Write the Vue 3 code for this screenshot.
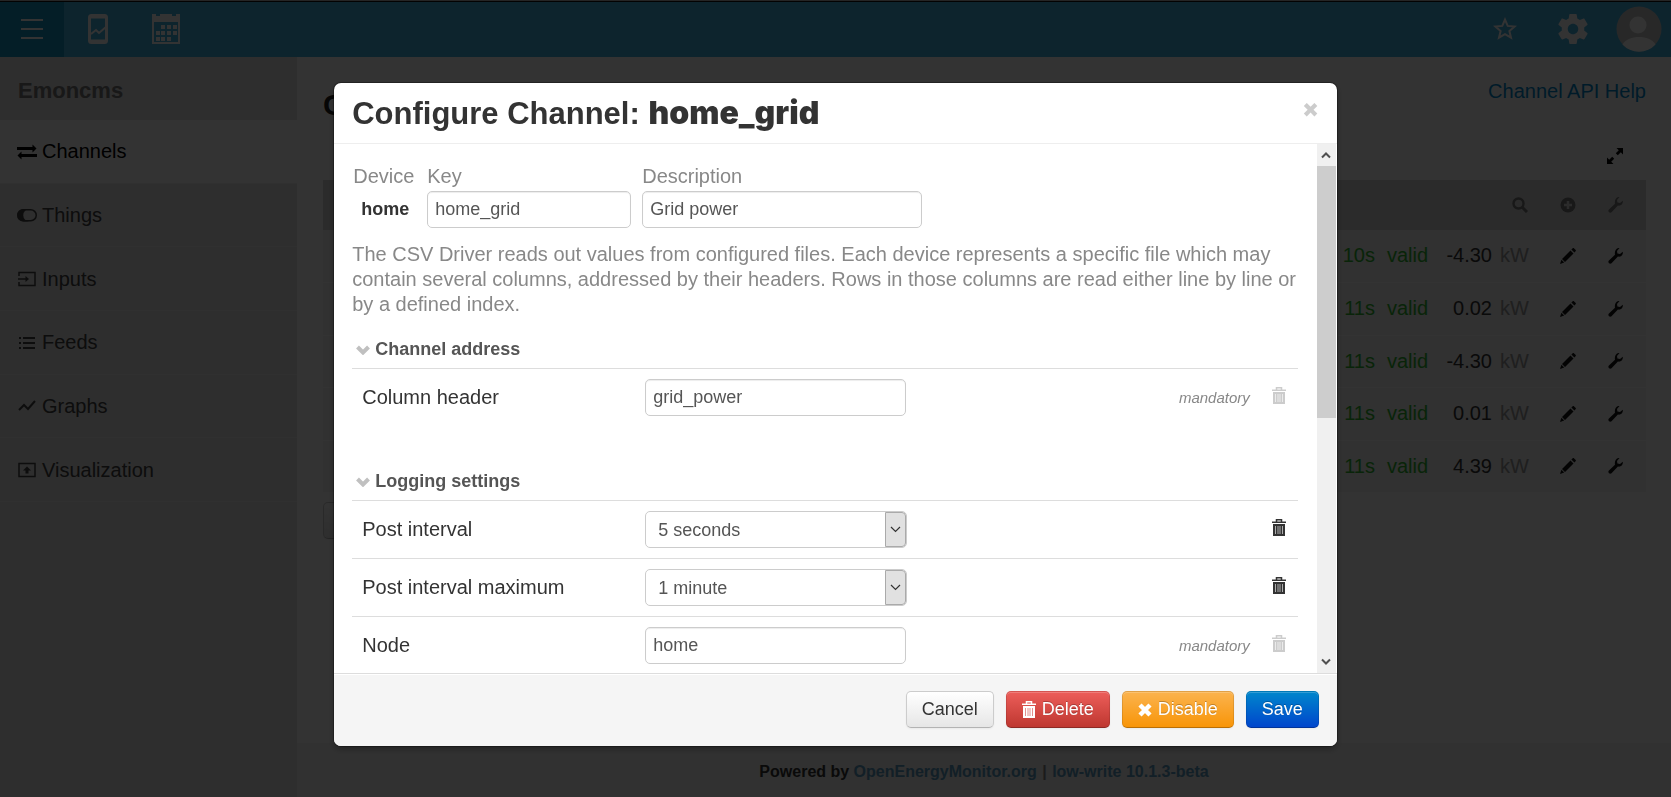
<script setup>
import { ref } from 'vue'

const menu = [
  { name: 'Channels', icon: 'swap' },
  { name: 'Things', icon: 'toggle' },
  { name: 'Inputs', icon: 'input' },
  { name: 'Feeds', icon: 'list' },
  { name: 'Graphs', icon: 'graph' },
  { name: 'Visualization', icon: 'present' },
]

const channels = [
  { time: '10s', value: '-4.30' },
  { time: '11s', value: '0.02' },
  { time: '11s', value: '-4.30' },
  { time: '11s', value: '0.01' },
  { time: '11s', value: '4.39' },
]

const key = ref('home_grid')
const description = ref('Grid power')
const header = ref('grid_power')
const interval = ref('5 seconds')
const maximum = ref('1 minute')
const node = ref('home')
</script>

<template>
  <div class="page">
    <header class="topbar">
      <button class="tb menu-btn" aria-label="Menu">
        <svg width="22" height="20" viewBox="0 0 22 20"><path d="M0 1h22M0 10h22M0 19h22" stroke="#fff" stroke-width="2" /></svg>
      </button>
      <button class="tb" aria-label="Apps">
        <svg width="20" height="30" viewBox="0 0 20 30" fill="none" stroke="#fff">
          <rect x="1.5" y="1.5" width="17" height="27" rx="2" stroke-width="3" />
          <path d="M1 3h18M1 27h18" stroke-width="3" />
          <path d="M3 20l5-4 3 3 7-6" stroke-width="2" />
        </svg>
      </button>
      <button class="tb" aria-label="Calendar">
        <svg width="28" height="30" viewBox="0 0 28 30" fill="#fff">
          <path fill-rule="evenodd" d="M0 0h4v2h4V0h12v2h4V0h4v30H0zM2 8v20h24V8z" />
          <path d="M9 11h4v4H9zM15 11h4v4h-4zM21 11h4v4h-4zM4 17h4v4H4zM9 17h4v4H9zM15 17h4v4h-4zM21 17h4v4h-4zM4 23h4v4H4zM9 23h4v4H9zM15 23h4v4h-4z" />
        </svg>
      </button>
      <span class="spacer"></span>
      <button class="tb star-btn" aria-label="Bookmarks">
        <svg width="24" height="24" viewBox="0 0 24 24"><path d="M12 2.6l2.7 6.3 6.9.6-5.2 4.5 1.6 6.7-6-3.6-6 3.6L7.6 14 2.4 9.500l6.900-.6z" fill="none" stroke="#fff" stroke-width="2" /></svg>
      </button>
      <button class="tb gear-btn" aria-label="Setup">
        <svg width="36" height="36" viewBox="0 0 24 24" fill="#fff"><path d="M19.430 12.980c.04-.32.07-.64.07-.98s-.03-.66-.07-.98l2.110-1.650c.19-.15.24-.42.120-.64l-2-3.460c-.12-.22-.39-.3-.61-.22l-2.490 1c-.52-.4-1.080-.73-1.690-.98l-.38-2.650C14.460 2.180 14.250 2 14 2h-4c-.25 0-.46.18-.49.42l-.38 2.650c-.61.25-1.170.59-1.690.98l-2.490-1c-.23-.09-.49 0-.61.22l-2 3.460c-.13.22-.07.49.12.64l2.110 1.650c-.04.32-.07.65-.07.98s.03.66.07.98l-2.110 1.650c-.19.15-.24.42-.12.64l2 3.460c.12.22.39.3.61.22l2.490-1c.52.4 1.080.73 1.690.98l.38 2.650c.03.24.24.42.49.42h4c.25 0 .46-.18.49-.42l.38-2.650c.61-.25 1.170-.59 1.690-.98l2.490 1c.23.09.49 0 .61-.22l2-3.460c.12-.22.07-.49-.12-.64l-2.110-1.650zM12 15.500c-1.930 0-3.500-1.570-3.500-3.500s1.570-3.500 3.500-3.500 3.500 1.570 3.500 3.500-1.570 3.500-3.500 3.500z" /></svg>
      </button>
      <button class="tb user-btn" aria-label="Account">
        <svg width="46" height="46" viewBox="0 0 46 46">
          <circle cx="23" cy="23" r="22.500" fill="#c8c8c8" />
          <circle cx="22" cy="19" r="8.500" fill="#fff" />
          <path d="M6.500 38.500C10 33 16 31 23 31s13 2 16.500 7.500A22.500 22.500 0 0 1 6.500 38.500z" fill="#fff" />
        </svg>
      </button>
    </header>

    <div class="columns">
      <aside class="sidebar">
        <h4>Emoncms</h4>
        <nav>
          <a v-for="(m, i) in menu" :key="m.name" href="#" :class="{ active: i === 0 }">
            <svg width="20" height="20" viewBox="0 0 20 20" fill="none" stroke="currentColor">
              <template v-if="m.icon === 'swap'">
                <path d="M0 6.500h17M3 13.500h17" stroke-width="3" />
                <path d="M15.500 2.500l4 4-4 4zM4.500 9.500l-4 4 4 4z" fill="currentColor" stroke="none" />
              </template>
              <template v-else-if="m.icon === 'toggle'">
                <rect x=".75" y="4.750" width="18.500" height="11" rx="5.500" stroke-width="1.500" />
                <path d="M6.500 4h6a6.200 6.200 0 0 0 0 12.500h-6a6.200 6.200 0 0 1 0-12.500z" fill="currentColor" stroke="none" />
              </template>
              <template v-else-if="m.icon === 'input'">
                <path d="M2 7V3.500h16v13H2V13" stroke-width="1.500" />
                <path d="M1 10h8" stroke-width="1.500" />
                <path d="M8.500 7l3.500 3-3.500 3z" fill="currentColor" stroke="none" />
              </template>
              <template v-else-if="m.icon === 'list'">
                <path d="M2 5h2M2 10h2M2 15h2M6 5h12M6 10h12M6 15h12" stroke-width="2" />
              </template>
              <template v-else-if="m.icon === 'graph'">
                <path d="M2 14l5-5 4 4 7-8" stroke-width="2" />
              </template>
              <template v-else>
                <rect x="2" y="3.500" width="16" height="13" stroke-width="1.500" />
                <path d="M10 6.500l4 4h-2.500v3h-3v-3H6z" fill="currentColor" stroke="none" />
              </template>
            </svg>
            {{ m.name }}
          </a>
        </nav>
      </aside>

      <main class="main">
        <div class="main-head">
          <h2>Channels</h2>
          <a href="#">Channel API Help</a>
        </div>
        <div class="tools">
          <button class="plain" aria-label="Expand">
            <svg width="16" height="16" viewBox="0 0 16 16" fill="#000"><path d="M9.500 0H16v6.500l-2.200-2.200-3 3-2-2 3-3zM6.500 16H0V9.500l2.200 2.200 3-3 2 2-3 3z" /></svg>
          </button>
        </div>
        <table class="list">
          <thead>
            <tr>
              <th class="time"></th>
              <th class="state"></th>
              <th class="value"></th>
              <th class="unit"><svg width="16" height="16" viewBox="0 0 16 16" fill="none" stroke="#777"><circle cx="6.500" cy="6.500" r="5" stroke-width="2.400" /><path d="M10 10l5 5" stroke-width="3" /></svg></th>
              <th class="act"><svg width="16" height="16" viewBox="0 0 16 16"><circle cx="8" cy="8" r="7.500" fill="#777" /><path d="M8 4v8M4 8h8" stroke="#d6d6d6" stroke-width="2.500" /></svg></th>
              <th class="act last"><svg width="16" height="16" viewBox="0 0 16 16" fill="#777"><path d="M12.500 0L10 3l.4 2.500L13 6l2.800-2.300c.6 3-1.800 5.600-4.900 4.900l-6.400 6.700c-1.500 1.400-4-.8-2.800-2.500l6.300-6C7.200 3 9.400-.4 12.500 0z" /></svg></th>
            </tr>
          </thead>
          <tbody>
            <tr v-for="(c, i) in channels" :key="i">
              <td class="ok time">{{ c.time }}</td>
              <td class="ok state">valid</td>
              <td class="value">{{ c.value }}</td>
              <td class="unit">kW</td>
              <td class="act"><svg width="16" height="16" viewBox="0 0 16 16" fill="#111"><path d="M11.400 1.500l3 3 1.100-1.200c.6-.6.5-1.100 0-1.600L14.100.4c-.5-.5-1-.5-1.600.1zM10.500 2.500L2 11l3 3 8.500-8.500zM1.400 11.800L0 16l4.200-1.400z" /></svg></td>
              <td class="act last"><svg width="16" height="16" viewBox="0 0 16 16" fill="#111"><path d="M12.500 0L10 3l.4 2.500L13 6l2.800-2.300c.6 3-1.800 5.600-4.900 4.900l-6.400 6.700c-1.500 1.400-4-.8-2.800-2.500l6.300-6C7.200 3 9.400-.4 12.500 0z" /></svg></td>
            </tr>
          </tbody>
        </table>
        <button class="btn new-btn" aria-label="New channel"></button>
        <footer class="page-footer">
          Powered by <a href="#">OpenEnergyMonitor.org</a> <span>|</span> <a href="#">low-write 10.1.3-beta</a>
        </footer>
      </main>
    </div>

    <div class="backdrop">
      <section class="modal" role="dialog" aria-labelledby="modal-title">
        <header class="modal-header">
          <h3 id="modal-title">Configure Channel: <b>home_grid</b></h3>
          <button class="close" aria-label="Close">×</button>
        </header>

        <div class="modal-middle">
          <div class="modal-body">
            <div class="ids">
              <div class="field device"><span class="cap">Device</span><strong>home</strong></div>
              <div class="field key"><label class="cap" for="key">Key</label><input id="key" v-model="key" type="text" /></div>
              <div class="field desc"><label class="cap" for="desc">Description</label><input id="desc" v-model="description" type="text" /></div>
            </div>
            <p class="info">The CSV Driver reads out values from configured files. Each device represents a specific file which may contain several columns, addressed by their headers. Rows in those columns are read either line by line or by a defined index.</p>

            <h5><svg width="14" height="10" viewBox="0 0 14 10"><path d="M1.500 2L7 7.500 12.500 2" fill="none" stroke="#c0c0c0" stroke-width="4" /></svg>Channel address</h5>
            <div class="row single">
              <label for="header">Column header</label>
              <input id="header" v-model="header" type="text" />
              <em>mandatory</em>
              <button class="plain trash off" disabled aria-label="Remove column header"><svg width="14" height="17" viewBox="0 0 14 17"><use href="#trash" /></svg></button>
            </div>

            <h5><svg width="14" height="10" viewBox="0 0 14 10"><path d="M1.500 2L7 7.500 12.500 2" fill="none" stroke="#c0c0c0" stroke-width="4" /></svg>Logging settings</h5>
            <div class="row">
              <label for="interval">Post interval</label>
              <span class="select">
                <select id="interval" v-model="interval"><option>5 seconds</option><option>10 seconds</option></select>
                <span class="arrow"><svg width="11" height="7" viewBox="0 0 11 7"><path d="M1 1l4.500 4.500L10 1" fill="none" stroke="#333" stroke-width="1.200" /></svg></span>
              </span>
              <em></em>
              <button class="plain trash" aria-label="Remove post interval"><svg width="14" height="17" viewBox="0 0 14 17"><use href="#trash" /></svg></button>
            </div>
            <div class="row">
              <label for="maximum">Post interval maximum</label>
              <span class="select">
                <select id="maximum" v-model="maximum"><option>1 minute</option><option>5 minutes</option></select>
                <span class="arrow"><svg width="11" height="7" viewBox="0 0 11 7"><path d="M1 1l4.500 4.500L10 1" fill="none" stroke="#333" stroke-width="1.200" /></svg></span>
              </span>
              <em></em>
              <button class="plain trash" aria-label="Remove post interval maximum"><svg width="14" height="17" viewBox="0 0 14 17"><use href="#trash" /></svg></button>
            </div>
            <div class="row">
              <label for="node">Node</label>
              <input id="node" v-model="node" type="text" />
              <em>mandatory</em>
              <button class="plain trash off" disabled aria-label="Remove node"><svg width="14" height="17" viewBox="0 0 14 17"><use href="#trash" /></svg></button>
            </div>
          </div>
          <div class="scrollbar" aria-hidden="true">
            <span class="step"><svg width="10" height="8" viewBox="0 0 10 8"><path d="M1 6.500l4-4 4 4" fill="none" stroke="#505050" stroke-width="2" /></svg></span>
            <span class="track"><span class="thumb"></span></span>
            <span class="step"><svg width="10" height="8" viewBox="0 0 10 8"><path d="M1 1.500l4 4 4-4" fill="none" stroke="#505050" stroke-width="2" /></svg></span>
          </div>
        </div>

        <footer class="modal-footer">
          <button class="btn">Cancel</button>
          <button class="btn danger"><svg width="14" height="17" viewBox="0 0 14 17"><use href="#trash" /></svg>Delete</button>
          <button class="btn warning"><svg width="14" height="14" viewBox="0 0 14 14"><path d="M2 2l10 10M12 2L2 12" stroke="#fff" stroke-width="4.500" /></svg>Disable</button>
          <button class="btn primary">Save</button>
        </footer>
      </section>
    </div>

    <svg class="defs" width="0" height="0" aria-hidden="true">
      <symbol id="trash" viewBox="0 0 14 17">
        <path d="M4.500 3V.75h5V3" fill="none" stroke="currentColor" stroke-width="1.500" />
        <path d="M0 2.500h14v1.500H0z" fill="currentColor" />
        <path fill-rule="evenodd" d="M1 5h12v12H1zM3 7v8h1V7zM5.500 7v8h1V7zM7.500 7v8h1V7zM10 7v8h1V7z" fill="currentColor" />
        <path d="M3 7h8v8H3z" fill="currentColor" opacity=".4" />
      </symbol>
    </svg>
  </div>
</template>

<style>
body { margin: 0; background: #fff; }
</style>

<style scoped>
* { box-sizing: border-box; }
.page {
  display: flex;
  flex-direction: column;
  min-height: 100vh;
  border-top: 1px solid #b8b8b8;
  font-family: "Liberation Sans", Arial, sans-serif;
  font-size: 20px;
  line-height: 25px;
  color: #333;
}
h2, h3, h4, h5, p { margin: 0; }
a { color: #08c; text-decoration: none; }
button, input, select { font-family: inherit; font-size: 18px; }
svg { display: block; }
.defs { position: absolute; }
.plain { padding: 0; border: 0; background: none; }

.topbar {
  display: flex;
  height: 56px;
  flex: none;
  border-top: 1px solid #111;
  background: #44b3e2;
}
.tb {
  display: flex;
  align-items: center;
  justify-content: center;
  width: 68px;
  padding: 0 0 1px;
  border: 0;
  background: none;
}
.tb.menu-btn { width: 64px; background: #1695c2; }
.spacer { flex: 1; }
.tb.user-btn { width: 64px; }

.columns { display: flex; flex: 1; }
.sidebar { width: 297px; flex: none; background: #e3e3e3; }
.sidebar h4 {
  padding: 21px 18px 17px;
  font-size: 22px;
  color: #777;
}
.sidebar nav {
  display: grid;
  grid-auto-rows: 1fr;
  min-height: 382px;
}
.sidebar a {
  display: flex;
  align-items: center;
  gap: 5px;
  padding: 1px 17px 0;
  border-bottom: 1px solid #eee;
  color: #444;
}
.sidebar a.active { background: #fff; color: #000; }

.main {
  display: flex;
  flex-direction: column;
  flex: 1;
  padding: 22px 25px 0 26px;
}
.main-head { display: flex; justify-content: space-between; }
.main-head h2 { padding-top: 6px; font-size: 30px; line-height: 40px; color: #222; }
.tools { display: flex; justify-content: flex-end; padding: 23px 23px 16px; }
.list { width: 100%; table-layout: fixed; border-collapse: collapse; }
.list th { height: 50px; padding: 0; background: #d6d6d6; }
.list td { height: 52px; padding: 0; border-bottom: 1px solid #fff; background: #f2f2f2; }
.list tr:nth-child(even) td { height: 53px; }
.ok { color: #2fb52f; }
.list .time { padding-right: 12px; text-align: right; }
.state { width: 39px; }
.value { width: 66px; text-align: right; }
.list .unit { width: 37px; padding-left: 8px; color: #999; }
.unit svg { margin-left: 12px; }
.act { width: 47px; }
.act svg { margin-left: auto; }
.list .last { width: 70px; padding-right: 23px; }
.new-btn { align-self: flex-start; width: 90px; height: 34px; margin-top: 9px; }
.page-footer {
  margin: auto -25px 0 -26px;
  padding: 16px 0 13px;
  background: #f2f2f2;
  font-size: 16px;
  font-weight: bold;
  text-align: center;
}
.page-footer a { color: #5a9cc0; }
.page-footer span { padding: 0 1px; color: #888; }

.backdrop {
  position: fixed;
  inset: 0;
  padding-top: 83px;
  background: rgba(0, 0, 0, 0.8);
}
.modal {
  width: 60%;
  margin: 0 auto;
  border-radius: 7px;
  background: #fff;
  box-shadow: 0 3px 7px rgba(0, 0, 0, 0.3), 0 0 0 1px rgba(0, 0, 0, 0.3);
  overflow: hidden;
}
.modal-header {
  display: flex;
  justify-content: space-between;
  padding: 12px 18px 10px;
  border-bottom: 1px solid #eee;
}
.modal-header h3 { font-size: 31px; line-height: 38px; }
.modal-header b { font-family: Inter, "Liberation Sans", sans-serif; font-size: 32px; font-weight: 900; line-height: 32px; }
.close {
  height: 28px;
  padding: 0;
  border: 0;
  background: none;
  font-family: Inter, "Liberation Sans", sans-serif;
  font-size: 24px;
  font-weight: 900;
  line-height: 28px;
  color: #ccc;
}
.modal-middle {
  display: flex;
  height: calc(100vh - 268px);
  padding-right: 1px;
}
.modal-body {
  flex: 1;
  min-width: 0;
  padding: 20px 19px 20px 18px;
  overflow: hidden;
}
.ids { display: flex; gap: 11px; }
.field { display: flex; flex-direction: column; gap: 2px; }
.cap { color: #888; }
.device { width: 64px; padding-left: 1px; }
.device strong { padding-left: 8px; font-size: 18px; line-height: 37px; }
.key { width: 204px; }
.desc { width: 280px; }
input, select {
  width: 100%;
  height: 37px;
  padding: 5px 7px;
  border: 1px solid #ccc;
  border-radius: 5px;
  background: #fff;
  color: #555;
  box-shadow: inset 0 1px 1px rgba(0, 0, 0, 0.075);
}
.info { padding: 14px 0 13px; color: #888; }
h5 {
  display: flex;
  align-items: center;
  gap: 5px;
  padding: 7px 0 6px 4px;
  font-size: 18px;
  color: #555;
}
.row {
  display: grid;
  grid-template-columns: 283px 261px 1fr 42px;
  align-items: center;
  height: 58px;
  padding: 0 2px 0 10px;
  border-top: 1px solid #ddd;
}
.row.single { margin-bottom: 36px; }
.row em { padding-right: 4px; font-size: 15px; color: #888; text-align: right; }
.trash { display: flex; justify-content: center; padding: 0 0 4px 8px; color: #333; }
.trash.off { color: #ccc; }
.select { position: relative; display: block; margin-right: -1px; }
.select select { appearance: none; padding: 5px 12px; box-shadow: none; }
.arrow {
  position: absolute;
  inset: 1px 1px 1px auto;
  display: flex;
  align-items: center;
  justify-content: center;
  width: 21px;
  border: 1px solid #aaa;
  border-radius: 0 4px 4px 0;
  background: #e1e1e1;
  pointer-events: none;
}
.scrollbar {
  display: flex;
  flex-direction: column;
  width: 19px;
  background: #f0f0f0;
}
.step { display: flex; align-items: center; justify-content: center; height: 22px; }
.track { flex: 1; }
.thumb { display: block; height: 52%; background: #cdcdcd; }

.modal-footer {
  display: flex;
  justify-content: flex-end;
  gap: 12px;
  padding: 17px 18px 18px;
  border-top: 1px solid #ddd;
  background: #f5f5f5;
  box-shadow: inset 0 1px 0 #fff;
}
.btn {
  display: flex;
  align-items: center;
  gap: 6px;
  height: 37px;
  padding: 0 15px;
  border: 1px solid #ccc;
  border-bottom-color: #b3b3b3;
  border-radius: 5px;
  background: linear-gradient(#fff, #e6e6e6);
  color: #333;
  box-shadow: inset 0 1px 0 rgba(255, 255, 255, 0.2), 0 1px 2px rgba(0, 0, 0, 0.05);
}
.danger, .warning, .primary {
  border-color: rgba(0, 0, 0, 0.1) rgba(0, 0, 0, 0.1) rgba(0, 0, 0, 0.25);
  background-origin: border-box;
  color: #fff;
  text-shadow: 0 -1px 0 rgba(0, 0, 0, 0.25);
}
.danger { background-image: linear-gradient(#ee5f5b, #bd362f); }
.warning { background-image: linear-gradient(#fbb450, #f89406); }
.primary { background-image: linear-gradient(#08c, #04c); }
</style>
